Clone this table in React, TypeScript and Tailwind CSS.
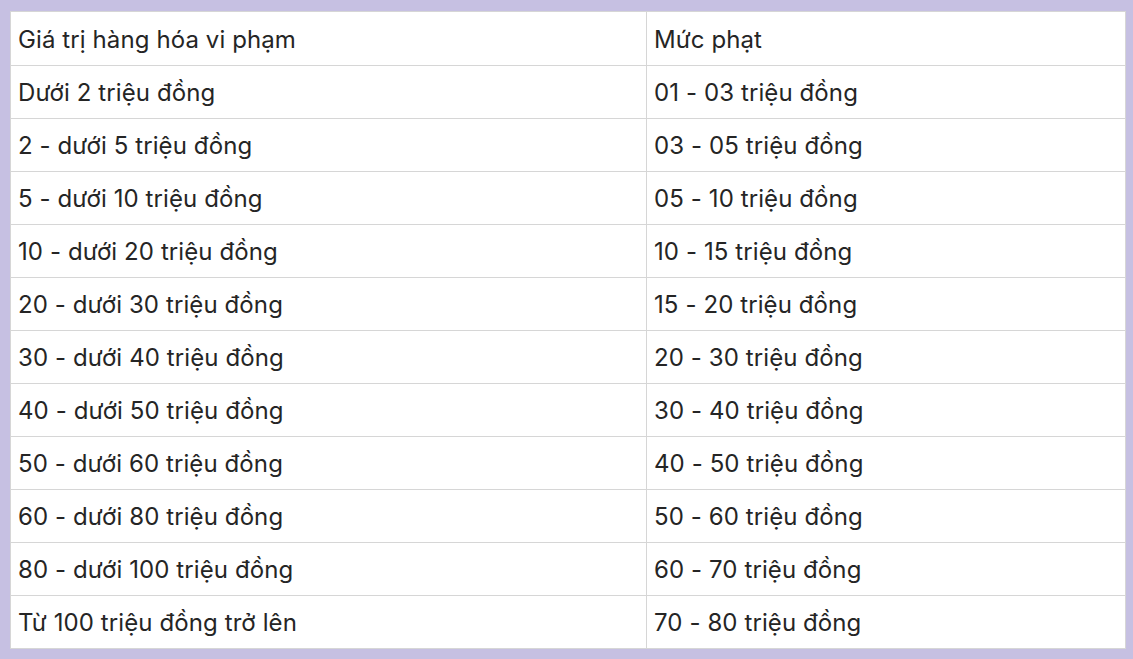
const rows: [string, string][] = [
  ["Giá trị hàng hóa vi phạm", "Mức phạt"],
  ["Dưới 2 triệu đồng", "01 - 03 triệu đồng"],
  ["2 - dưới 5 triệu đồng", "03 - 05 triệu đồng"],
  ["5 - dưới 10 triệu đồng", "05 - 10 triệu đồng"],
  ["10 - dưới 20 triệu đồng", "10 - 15 triệu đồng"],
  ["20 - dưới 30 triệu đồng", "15 - 20 triệu đồng"],
  ["30 - dưới 40 triệu đồng", "20 - 30 triệu đồng"],
  ["40 - dưới 50 triệu đồng", "30 - 40 triệu đồng"],
  ["50 - dưới 60 triệu đồng", "40 - 50 triệu đồng"],
  ["60 - dưới 80 triệu đồng", "50 - 60 triệu đồng"],
  ["80 - dưới 100 triệu đồng", "60 - 70 triệu đồng"],
  ["Từ 100 triệu đồng trở lên", "70 - 80 triệu đồng"],
];

export default function App() {
  return (
    <div className="w-[1133px] h-[659px] bg-[#c6c0e2] pl-[10px] pt-[11px] pr-[7px] pb-[10px] font-['Inter',sans-serif] text-[#252525]">
      <div className="bg-white border border-[#d6d6d6] h-full">
        {rows.map(([a, b], i) => (
          <div
            key={i}
            className={`grid grid-cols-[636px_1fr] h-[53px] ${i === 0 ? "" : "border-t border-[#d6d6d6]"}`}
          >
            <div className="flex items-center pl-[7px] pt-[2px] text-[24px] tracking-[0.1px] border-r border-[#d6d6d6]">
              {a}
            </div>
            <div className="flex items-center pl-[7px] pt-[2px] text-[24px] tracking-[0.1px]">
              {b}
            </div>
          </div>
        ))}
      </div>
    </div>
  );
}
